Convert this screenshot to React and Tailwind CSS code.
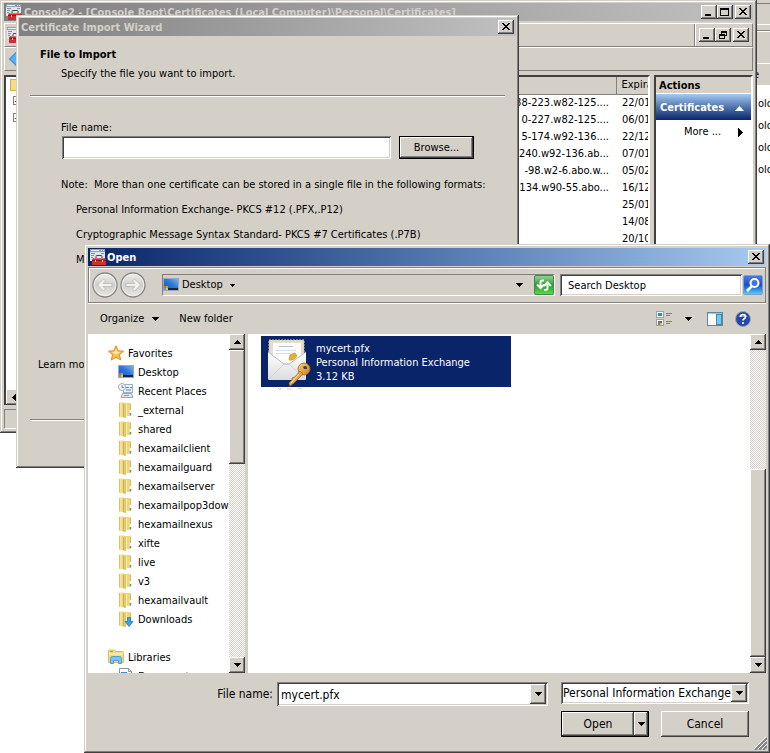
import React from 'react';
import clsx from 'clsx';

const raised = 'bg-[#d4d0c8] shadow-[inset_-1px_-1px_0_#404040,inset_1px_1px_0_#fff,inset_-2px_-2px_0_#808080]';
const sunken = 'shadow-[inset_1px_1px_0_#808080,inset_-1px_-1px_0_#fff,inset_2px_2px_0_#404040,inset_-2px_-2px_0_#d4d0c8]';
const frame =
  'bg-[#d4d0c8] shadow-[inset_-1px_-1px_0_#404040,inset_1px_1px_0_#d4d0c8,inset_-2px_-2px_0_#808080,inset_2px_2px_0_#fff]';

function Arrow({ dir = 'down', className }) {
  const shapes = {
    down: [7, 4, 'M0 0h7v1h-1v1h-1v1h-1v1h-1v-1h-1v-1h-1v-1h-1z'],
    small: [5, 3, 'M0 0h5v1h-1v1h-1v1h-1v-1h-1v-1h-1z'],
    up: [7, 4, 'M0 4h7v-1h-1v-1h-1v-1h-1v-1h-1v1h-1v1h-1v1h-1z'],
    left: [4, 7, 'M4 0v7h-1v-1h-1v-1h-1v-1h-1v-1h1v-1h1v-1h1v-1z'],
    right: [5, 9, 'M0 0v9h1v-1h1v-1h1v-1h1v-1h1v-1h-1v-1h-1v-1h-1v-1h-1v-1z'],
  };
  const [width, height, d] = shapes[dir];
  return (
    <svg className={clsx('shrink-0', className)} width={width} height={height} fill="currentColor" shapeRendering="crispEdges">
      <path d={d} />
    </svg>
  );
}

function CaptionButton({ kind, label }) {
  return (
    <button aria-label={label} className={clsx('flex h-[14px] w-4 shrink-0 items-center justify-center', raised)}>
      <svg width="10" height="8" shapeRendering="crispEdges">
        {kind === 'close' && (
          <path d="M1 0h2v1h1v1h2v-1h1v-1h2v1h-1v1h-1v1h-1v1h1v1h1v1h1v1h-2v-1h-1v-1h-2v1h-1v1h-2v-1h1v-1h1v-1h1v-1h-1v-1h-1v-1h-1z" />
        )}
        {kind === 'min' && <path d="M1 6h6v2h-6z" />}
        {kind === 'max' && <path fillRule="evenodd" d="M0 0h9v8h-9zM1 2h7v5h-7z" />}
        {kind === 'restore' && <path fillRule="evenodd" d="M3 0h6v5h-2v3h-6v-5h2zM4 2v1h3v1h1v-2zM2 5v2h4v-2z" />}
      </svg>
    </button>
  );
}

function ConsoleIcon() {
  return (
    <svg className="shrink-0" width="16" height="16" viewBox="0 0 16 16">
      <rect x="0" y="0" width="15" height="12" fill="#dfe6ea" />
      <rect x="0" y="0" width="15" height="3" fill="#8fa0ad" />
      <path d="M1 1.500h8M11 1.500h1M13 1.500h1" stroke="#eef2f5" />
      <path d="M1 4.500h4M1 6.500h3M1 8.500h2M11 4.500h3" stroke="#7a94a8" />
      <path d="M6 9V7.500q0-1 1-1h4q1 0 1 1V9" fill="none" stroke="#444" />
      <path d="M3 9h12l1 2v5H2v-5z" fill="#cf2f2f" />
      <path d="M2 11.500h14" stroke="#8c1414" />
      <path d="M3.500 9.500h11" stroke="#e86a6a" />
      <path d="M5.500 11v2M12.500 11v2" stroke="#f0d0d0" />
    </svg>
  );
}

function DesktopIcon() {
  return (
    <svg className="shrink-0" width="16" height="16" viewBox="0 0 16 16">
      <defs>
        <linearGradient id="screen" x1="0" y1="1" x2="1" y2="0">
          <stop offset="0" stopColor="#1d4bb5" />
          <stop offset="0.55" stopColor="#2f78dc" />
          <stop offset="1" stopColor="#7fb8f4" />
        </linearGradient>
      </defs>
      <rect x="0.500" y="1.500" width="15" height="12" fill="url(#screen)" stroke="#98a8c0" />
      <rect x="1" y="11" width="14" height="2" fill="#16263e" />
      <rect x="1" y="9" width="2" height="2" fill="#f05a28" />
      <rect x="3" y="9" width="2" height="2" fill="#7fc241" />
      <rect x="1" y="11" width="2" height="2" fill="#31a8e0" />
      <rect x="3" y="11" width="2" height="2" fill="#fbc42d" />
    </svg>
  );
}

function FolderIcon({ download }) {
  return (
    <svg className="shrink-0" width="16" height="16" viewBox="0 0 16 16">
      <defs>
        <linearGradient id="flap" x1="0" x2="1">
          <stop offset="0" stopColor="#f9eea9" />
          <stop offset="1" stopColor="#e0c25f" />
        </linearGradient>
      </defs>
      <path d="M5 1h7q1 0 1 1v12H7z" fill="#ecd67e" />
      <path d="M12.500 2v12" stroke="#d8b95c" />
      <path d="M1 0.500h5l2 2V16H6l-1-1H1z" fill="url(#flap)" />
      <path d="M1.500 1v13.500" stroke="#dcc068" />
      <path d="M5.500 2v13" stroke="#cfaf52" />
      <path d="M8.500 2v12" stroke="#f8ecae" />
      {!download && <path d="M12.500 8v3" stroke="#fff" strokeWidth="1.500" />}
      {!download && <path d="M12.500 11v2" stroke="#3f97d8" strokeWidth="1.500" />}
      {download && <path d="M9.500 6.500h3v4h2.500L11 15.500 7 10.500h2.500z" fill="#3da2ee" stroke="#1b6fc0" strokeWidth="0.700" />}
    </svg>
  );
}

function StarIcon() {
  return (
    <svg className="shrink-0" width="16" height="16" viewBox="0 0 16 16">
      <path d="M8 0.800l2.100 5 5.400 0.400-4.100 3.500 1.300 5.300L8 12.200 3.300 15l1.300-5.300L0.500 6.200l5.400-0.400z" fill="#fcc34c" stroke="#e8802f" />
      <path d="M8 3.500l1.300 3.300 3 0.300L8 9.500 4 7.100l3-0.300z" fill="#ffe9a8" />
    </svg>
  );
}

function RecentIcon() {
  return (
    <svg className="shrink-0" width="16" height="16" viewBox="0 0 16 16">
      <rect x="5.500" y="1.500" width="9" height="8" fill="#e9f2f8" stroke="#9fb2c0" />
      <path d="M8 4.500h3M12 4.500h2M8 7h5" stroke="#3b8ed0" />
      <path d="M4.500 10.500h9l1.500 4H3z" fill="#dfe5ea" stroke="#9aa8b4" />
      <path d="M6 12.500h5" stroke="#6aa8d8" />
      <circle cx="4" cy="4" r="3.500" fill="#f4f6f8" stroke="#a2acb6" />
      <path d="M4 2v2.500h2" stroke="#667" fill="none" strokeWidth="0.800" />
    </svg>
  );
}

function LibraryIcon() {
  return (
    <svg className="shrink-0" width="16" height="16" viewBox="0 0 16 16">
      <path d="M0.500 2q0-1 1-1h5l1 1.500h7q1 0 1 1v10h-15z" fill="#f3dc86" stroke="#d9bd66" />
      <path d="M2 2.500h3" stroke="#6bbf3c" />
      <path d="M1 5h14" stroke="#fdf5cf" />
      <path d="M2.500 14.500v-5q0-2 2-2h7q2 0 2 2v5h-3v-3h-5v3z" fill="#7cc4ee" stroke="#4f9fd4" />
    </svg>
  );
}

function DocumentIcon() {
  return (
    <svg className="shrink-0" width="16" height="16" viewBox="0 0 16 16">
      <path d="M1.500 0.500h9l3 3v12h-12z" fill="#f8fafc" stroke="#8a97a3" />
      <path d="M10.500 0.500v3h3" fill="none" stroke="#8a97a3" />
      <path d="M3 4.500h6" stroke="#3b8ed0" />
    </svg>
  );
}

function CertificateIcon() {
  return (
    <svg className="shrink-0 overflow-visible" width="48" height="51" viewBox="0 0 48 51">
      <defs>
        <linearGradient id="paper" x1="0" y1="0" x2="0" y2="1">
          <stop offset="0" stopColor="#ffffff" />
          <stop offset="1" stopColor="#dcdcde" />
        </linearGradient>
        <linearGradient id="key" x1="0" y1="0" x2="1" y2="1">
          <stop offset="0" stopColor="#f9d277" />
          <stop offset="1" stopColor="#c4801f" />
        </linearGradient>
      </defs>
      <rect x="5" y="4" width="35" height="22" fill="#e4ddcf" stroke="#c9bfae" strokeDasharray="2 1" />
      <rect x="9" y="7" width="28" height="22" fill="#fbfbf8" />
      <path d="M15 10.500h14" stroke="#b4c2dc" />
      <path d="M12 14.500h20M12 17.500h14" stroke="#d8dfec" />
      <path d="M25 24l1-5 5-2 2 3-3 4z" fill="#e4b028" stroke="#c9972c" strokeWidth="0.700" />
      <path d="M4 16l17 13L42 16v27q0 1-1 1H5q-1 0-1-1z" fill="url(#paper)" />
      <path d="M5 43l15-15q2-2 5 0l16 15" fill="none" stroke="#d0d0d4" />
      <path d="M4 16l16 12q2.500 1 5 0l17-12" fill="none" stroke="#bdbdc2" />
      <circle cx="40" cy="33" r="6" fill="url(#key)" stroke="#a5681a" strokeWidth="0.800" />
      <path d="M36 35l3 3-9 9-4 3-1-3 3-3 0-2 3-1z" fill="url(#key)" stroke="#a5681a" strokeWidth="0.800" />
      <path d="M39 31q2-2 4 0v2h-3z" fill="#4a3a6a" />
      <path d="M35 38l-8 9" stroke="#ffe7a8" />
      <path d="M14 52l2 2 1-2M23 53h5M34 52l4 1" fill="none" stroke="#e9c98f" />
    </svg>
  );
}

function NavCircle({ flip, label }) {
  return (
    <button aria-label={label} className="h-[26px] w-[28px]">
      <svg width="28" height="26" viewBox="0 0 28 26" className={clsx(flip && '-scale-x-100')}>
        <defs>
          <linearGradient id="orb" x1="0" y1="0" x2="0" y2="1">
            <stop offset="0" stopColor="#f1f0ed" />
            <stop offset="0.5" stopColor="#d0cec9" />
            <stop offset="1" stopColor="#e9e8e4" />
          </linearGradient>
        </defs>
        <circle cx="14" cy="13" r="12" fill="url(#orb)" stroke="#84868a" strokeWidth="1.300" />
        <circle cx="14" cy="13" r="10.800" fill="none" stroke="#f4f3f0" strokeWidth="0.800" />
        <path d="M6.500 13l6-6 2 2-2.500 2.500h9v3h-9L14.500 17l-2 2z" fill="#f3f2ef" stroke="#b4b2ad" strokeWidth="0.700" />
      </svg>
    </button>
  );
}

function Scrollbar({ thumb }) {
  return (
    <div className="flex w-4 shrink-0 flex-col bg-[repeating-conic-gradient(#fff_0_25%,#d4d0c8_0_50%)] bg-[length:2px_2px]">
      <button aria-label="Scroll up" className={clsx('flex h-4 shrink-0 items-center justify-center', raised)}>
        <Arrow dir="up" />
      </button>
      <div className={clsx('flex min-h-0 flex-1 flex-col', thumb === 'bottom' && 'justify-end')}>
        <div className={clsx(raised, thumb === 'bottom' ? 'h-[188px]' : 'h-[114px]')} />
      </div>
      <button aria-label="Scroll down" className={clsx('flex h-4 shrink-0 items-center justify-center', raised)}>
        <Arrow />
      </button>
    </div>
  );
}

const certificates = [
  ['88-223.w82-125....', '22/01/2012'],
  ['0-227.w82-125....', '06/01/2012'],
  ['5-174.w92-136....', '22/12/2011'],
  ['240.w92-136.ab...', '07/01/2012'],
  ['-98.w2-6.abo.w...', '05/02/2012'],
  ['134.w90-55.abo...', '16/12/2011'],
  ['', '25/01/2012'],
  ['', '14/08/2012'],
  ['', '20/10/2012'],
];

function BackWindow() {
  return (
    <section className="absolute top-0 right-0 left-[757px] h-[300px] overflow-hidden bg-white">
      <div className="h-1 border-b border-[#808080] bg-[#d4d0c8]" />
      <div className="h-5 bg-[#d4d0c8]" />
      <div className="h-[7px] border-y border-t-white border-b-[#808080] bg-[#d4d0c8]" />
      <div className="h-8 border-t border-white bg-[#d4d0c8]" />
      <div className="flex h-[22px] items-center border-t border-white bg-[#d4d0c8]">
        <span className="-ml-1">e</span>
      </div>
      <ul className="pt-2 pl-px">
        {[0, 1, 2, 3].map((n) => (
          <li key={n} className="h-[22px] leading-[22px]">olo</li>
        ))}
      </ul>
    </section>
  );
}

function ConsoleWindow() {
  return (
    <section className={clsx('absolute top-0 left-0 flex h-[433px] w-[757px] flex-col px-1 pt-[3px] pb-1', frame)}>
      <header className="flex h-[18px] shrink-0 items-center gap-[2px] bg-linear-to-r from-[#808080] to-[#c0c0c0] px-[2px] font-bold text-[#d4d0c8]">
        <ConsoleIcon />
        <h1 className="flex-1 truncate pt-[2px]">Console2 - [Console Root\Certificates (Local Computer)\Personal\Certificates]</h1>
        <div className="flex">
          <CaptionButton kind="min" label="Minimize" />
          <CaptionButton kind="max" label="Maximize" />
        </div>
        <CaptionButton kind="close" label="Close" />
      </header>
      <div className="mt-[2px] flex h-6 shrink-0 border border-t-white border-r-[#808080] border-b-[#808080] border-l-white">
        <div className="flex flex-1 items-center border-r border-[#808080] pl-[2px]">
          <ConsoleIcon />
        </div>
        <div className="flex items-center border-l border-white pr-[3px] pl-[3px]">
          <CaptionButton kind="min" label="Minimize child window" />
          <CaptionButton kind="restore" label="Restore child window" />
          <span className="w-[2px]" />
          <CaptionButton kind="close" label="Close child window" />
        </div>
      </div>
      <div className="flex h-6 shrink-0 items-center border border-t-white border-r-[#808080] border-b-[#808080] border-l-white pl-1">
        <svg width="16" height="16" viewBox="0 0 16 16">
          <path d="M0.500 8l7-7v4h8v6h-8v4z" fill="#4fb4f0" stroke="#2272b8" />
        </svg>
      </div>
      <div className="mt-1 flex min-h-0 flex-1">
        <nav aria-label="Console tree" className="flex w-[150px] shrink-0 flex-col border-t-2 border-l-2 border-[#404040] bg-white">
          <div className="flex-1 pt-[2px] pl-1">
            <div className="h-3 w-4 border border-[#d1ae50] bg-[#f6dc8a]" />
            <div className="flex flex-col gap-2 pt-[5px] pl-[3px]">
              <span className="flex size-[9px] items-center justify-center border border-[#808080] text-[9px]">+</span>
              <span className="flex size-[9px] items-center justify-center border border-[#808080] text-[9px]">+</span>
            </div>
          </div>
          <button aria-label="Scroll left" className={clsx('flex size-4 items-center justify-center', raised)}>
            <Arrow dir="left" />
          </button>
        </nav>
        <div className="flex-1 overflow-hidden border-t-2 border-r-2 border-t-[#404040] border-r-white bg-white">
          <table className="w-full table-fixed border-collapse">
            <thead>
              <tr className="h-[17px] bg-[#d4d0c8]">
                <th className="border-r border-b border-[#808080]" aria-label="Issued To" />
                <th className="w-8 overflow-hidden border-b border-l border-b-[#808080] border-l-white p-0 pl-[5px] text-left font-normal">Expiration</th>
              </tr>
            </thead>
            <tbody>
              {certificates.map(([name, date]) => (
                <tr key={date + name} className="h-[17px]">
                  <td className="overflow-hidden p-0 pr-[7px] text-right">{name}</td>
                  <td className="overflow-hidden p-0 pl-[6px]">{date}</td>
                </tr>
              ))}
            </tbody>
          </table>
        </div>
        <aside className="ml-1 w-[99px] border-2 border-t-[#404040] border-r-white border-b-white border-l-[#404040] bg-white">
          <h2 className="h-[17px] border-b border-white bg-[#d4d0c8] pl-[3px] leading-[18px] font-bold">Actions</h2>
          <button className="flex h-[26px] w-full items-center justify-between bg-linear-to-b from-[#a6caf0] to-[#0a246a] pt-[2px] pr-[7px] pl-1 font-bold text-white">
            Certificates
            <svg width="9" height="5" fill="#fff">
              <polygon points="0,5 9,5 4.500,0" />
            </svg>
          </button>
          <button className="flex h-6 w-full items-center justify-between pr-2 pl-7">
            More ...
            <Arrow dir="right" />
          </button>
        </aside>
      </div>
      <footer className="mt-1 h-5 border border-t-[#808080] border-r-white border-b-white border-l-[#808080]" />
    </section>
  );
}

function WizardWindow() {
  return (
    <section className={clsx('absolute top-[15px] left-4 h-[453px] w-[503px] p-[3px]', frame)}>
      <header className="flex h-[18px] items-center bg-linear-to-r from-[#808080] to-[#c0c0c0] pr-[2px] pl-[2px] font-bold text-[#d4d0c8]">
        <h1 className="flex-1 pt-[2px]">Certificate Import Wizard</h1>
        <CaptionButton kind="close" label="Close wizard" />
      </header>
      <div className="px-[11px] pt-[11px] leading-4">
        <h2 className="pl-[10px] font-bold">File to Import</h2>
        <p className="mt-[3px] pl-[31px]">Specify the file you want to import.</p>
        <hr className="mt-[13px] h-[2px] border-t border-b border-t-[#808080] border-b-white" />
        <div className="mt-[23px] pl-[31px]">
          <label htmlFor="import-file">File name:</label>
          <div className="flex gap-2 pl-px">
            <input id="import-file" className={clsx('h-[23px] w-[329px] bg-white px-1 outline-none', sunken)} />
            <button className="h-[23px] w-[75px] border border-black bg-[#d4d0c8] shadow-[inset_-1px_-1px_0_#404040,inset_1px_1px_0_#fff,inset_-2px_-2px_0_#808080]">
              Browse...
            </button>
          </div>
          <p className="mt-[18px] whitespace-pre">Note:  More than one certificate can be stored in a single file in the following formats:</p>
          <ul className="mt-[9px] flex flex-col gap-[9px] pl-[15px]">
            <li>Personal Information Exchange- PKCS #12 (.PFX,.P12)</li>
            <li>Cryptographic Message Syntax Standard- PKCS #7 Certificates (.P7B)</li>
            <li>Microsoft</li>
          </ul>
        </div>
        <p className="mt-[89px] pl-2">
          <a href="#learn">Learn more</a>
        </p>
        <hr className="mt-[46px] h-[2px] border-t border-b border-t-[#808080] border-b-white" />
      </div>
    </section>
  );
}

const places = [
  ['Desktop', DesktopIcon],
  ['Recent Places', RecentIcon],
  ['_external', FolderIcon],
  ['shared', FolderIcon],
  ['hexamailclient', FolderIcon],
  ['hexamailguard', FolderIcon],
  ['hexamailserver', FolderIcon],
  ['hexamailpop3downloader', FolderIcon],
  ['hexamailnexus', FolderIcon],
  ['xifte', FolderIcon],
  ['live', FolderIcon],
  ['v3', FolderIcon],
  ['hexamailvault', FolderIcon],
];

function Place({ icon, label, root }) {
  return (
    <li className={clsx('flex h-[19px] items-center gap-1 whitespace-nowrap', root ? 'pl-5' : 'pl-[30px]')}>
      {icon}
      <span className="pt-[2px]">{label}</span>
    </li>
  );
}

function OpenDialog() {
  return (
    <section className={clsx('absolute top-[244px] right-0 left-[84px] flex flex-col p-1', frame)}>
      <header className="flex h-[18px] items-center gap-px bg-linear-to-r from-[#0a246a] to-[#a6caf0] px-[2px] font-bold text-white">
        <ConsoleIcon />
        <h1 className="flex-1 pt-[2px]">Open</h1>
        <CaptionButton kind="close" label="Close dialog" />
      </header>

      <div className="mt-[1px] flex h-9 items-center border border-[#808080] pr-[2px] pl-[2px] shadow-[inset_1px_1px_0_#fff,0_1px_0_#fff]">
        <NavCircle label="Back" />
        <NavCircle label="Forward" flip />
        <div className="ml-[15px] flex h-[22px] min-w-0 flex-1 items-center border border-t-[#808080] border-r-white border-b-white border-l-[#808080]">
          <DesktopIcon />
          <button className="ml-[3px] flex items-center gap-[7px]">
            Desktop
            <Arrow dir="small" />
          </button>
          <span className="flex-1" />
          <button aria-label="Previous locations" className="mr-[11px]">
            <Arrow />
          </button>
          <button aria-label="Refresh" className="flex size-5 items-center justify-center rounded-[2px] border border-[#3f8a4a] bg-linear-to-b from-[#8fd08f] via-[#1f9e2a] to-[#5fd64a]">
            <svg width="18" height="16" viewBox="0 0 18 16" fill="none" stroke="#fff" strokeWidth="2">
              <path d="M9 3.500H7.500q-2 0-2 2V10M2 7.500l3.500 3.500L9 7.500" />
              <path d="M9 13h1.500q2 0 2-2V6M9 9l3.500-3.500L16 9" />
            </svg>
          </button>
        </div>
        <input
          aria-label="Search Desktop"
          placeholder="Search Desktop"
          className={clsx('ml-[5px] h-[22px] w-[182px] bg-white pl-2 placeholder-black outline-none', sunken)}
        />
        <button aria-label="Search" className="ml-[1px] flex size-5 items-center justify-center rounded-[2px] border border-[#7f9fd0] bg-linear-to-b from-[#4a78dc] via-[#1a4fd0] to-[#5cc8f4]">
          <svg width="16" height="16" viewBox="0 0 16 16" fill="none" stroke="#fff" strokeWidth="2">
            <circle cx="9.500" cy="6" r="4" fill="#3f78e0" />
            <path d="M6.500 9.500L2 14" strokeWidth="2.500" />
          </svg>
        </button>
      </div>

      <div className="flex h-[31px] items-center pr-[15px] pl-3">
        <button className="flex items-center gap-2">
          Organize
          <Arrow />
        </button>
        <button className="ml-5">New folder</button>
        <span className="flex-1" />
        <button aria-label="Change view">
          <svg width="16" height="16" viewBox="0 0 16 16">
            <rect x="0.500" y="0.500" width="7" height="6" fill="#f6fafc" stroke="#8fa4b4" />
            <rect x="2" y="2" width="4" height="3" fill="#2f8f9a" />
            <rect x="0.500" y="8.500" width="7" height="6" fill="#fff" stroke="#8fa4b4" />
            <rect x="2" y="10" width="2" height="2" fill="#e04a2a" />
            <rect x="4" y="10" width="2" height="2" fill="#3a62d0" />
            <rect x="2" y="12" width="2" height="2" fill="#3fa83a" />
            <rect x="4" y="12" width="2" height="2" fill="#f0c030" />
            <path d="M10 2.500h6M10 4.500h4M10 10.500h6M10 12.500h4" stroke="#6b83a8" />
          </svg>
        </button>
        <button aria-label="More views" className="ml-[13px]">
          <Arrow />
        </button>
        <button aria-label="Preview pane" className="ml-[15px]">
          <svg width="16" height="14" viewBox="0 0 16 14">
            <rect x="0.500" y="0.500" width="15" height="13" fill="#fff" stroke="#5f87a8" />
            <path d="M1 1.500h14" stroke="#a8c4da" />
            <rect x="9.500" y="2.500" width="5" height="10" fill="#7cc8ea" stroke="#3f88b0" />
          </svg>
        </button>
        <button aria-label="Help" className="ml-3">
          <svg width="16" height="16" viewBox="0 0 16 16">
            <circle cx="8" cy="8" r="7.500" fill="#2747a8" stroke="#9aa4bc" />
            <path d="M3 6q5-6 10 0z" fill="#6f8fe0" />
            <path d="M5.500 6q0-2.500 2.500-2.500t2.500 2.200q0 1.300-1.300 2T8 9.500" fill="none" stroke="#fff" strokeWidth="1.700" />
            <circle cx="8" cy="12" r="1.100" fill="#fff" />
          </svg>
        </button>
      </div>

      <div className="flex h-[339px] bg-white">
        <nav aria-label="Places" className="w-[141px] shrink-0 overflow-hidden pt-[9px]">
          <ul>
            <Place root icon={<StarIcon />} label="Favorites" />
            {places.map(([label, Icon]) => (
              <Place key={label} icon={<Icon />} label={label} />
            ))}
            <Place icon={<FolderIcon download />} label="Downloads" />
          </ul>
          <ul className="pt-[19px]">
            <Place root icon={<LibraryIcon />} label="Libraries" />
            <Place icon={<DocumentIcon />} label="Documents" />
          </ul>
        </nav>
        <Scrollbar thumb="top" />
        <div className="w-[3px] shrink-0 bg-[#d4d0c8]" />
        <div className="min-w-0 flex-1 pt-[2px] pl-[13px]">
          <button className="flex h-[51px] w-[250px] items-center gap-1 bg-[#0a246a] pl-[3px] text-left leading-[14px] text-white">
            <CertificateIcon />
            <span className="pt-[2px]">
              mycert.pfx
              <br />
              Personal Information Exchange
              <br />
              3.12 KB
            </span>
          </button>
        </div>
        <Scrollbar thumb="bottom" />
      </div>

      <div className="flex items-start justify-end pt-[9px] pr-[17px] text-[12px]">
        <label htmlFor="open-file" className="mr-1 leading-6">File name:</label>
        <div className={clsx('flex h-6 w-[271px] bg-white p-[2px]', sunken)}>
          <input id="open-file" defaultValue="mycert.pfx" className="min-w-0 flex-1 pt-px pl-[2px] outline-none" />
          <button aria-label="Show file names" className={clsx('flex w-4 items-center justify-center', raised)}>
            <Arrow />
          </button>
        </div>
        <div className={clsx('relative ml-[13px] h-[22px] w-[188px] bg-white p-[2px]', sunken)}>
          <select aria-label="File type" className="h-full w-full appearance-none outline-none">
            <option>Personal Information Exchange</option>
          </select>
          <span className={clsx('pointer-events-none absolute inset-y-[2px] right-[2px] flex w-4 items-center justify-center', raised)}>
            <Arrow />
          </span>
        </div>
      </div>
      <div className="mt-[5px] flex justify-end gap-3 pr-[17px] pb-3 text-[12px]">
        <div className="flex h-[26px] w-[88px] border border-black">
          <button className={clsx('flex-1', raised)}>Open</button>
          <button aria-label="Open options" className={clsx('flex w-[14px] items-center justify-center', raised)}>
            <Arrow />
          </button>
        </div>
        <button className={clsx('h-[26px] w-[88px]', raised)}>Cancel</button>
      </div>
      <svg className="absolute right-[3px] bottom-[3px]" width="13" height="13" strokeWidth="2">
        <path d="M1 13L13 1M5 13L13 5M9 13L13 9" stroke="#808080" />
        <path d="M0 12L12 0M4 12L13 3M8 12L13 7" stroke="#fff" strokeWidth="1" />
      </svg>
    </section>
  );
}

export default function App() {
  return (
    <main className="relative min-h-screen overflow-hidden bg-white font-['DejaVu_Sans_Condensed','DejaVu_Sans',sans-serif] text-[11px] leading-[14px] text-black">
      <BackWindow />
      <ConsoleWindow />
      <WizardWindow />
      <OpenDialog />
    </main>
  );
}
